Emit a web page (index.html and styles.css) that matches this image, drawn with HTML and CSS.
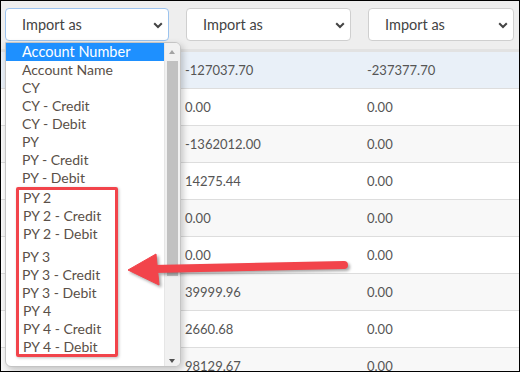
FILE: index.html
```html
<!DOCTYPE html>
<html lang="en">
<head>
    <meta charset="UTF-8">
    <meta name="viewport" content="width=device-width, initial-scale=1.0">
    <title>Import mapping</title>
    <link rel="stylesheet" href="styles.css">
</head>
<body>
    <div class="frame">
        <div class="grid head">
            <div class="cell first">
                <div class="select focused"><span>Import as</span><svg width="10" height="7" viewBox="0 0 10 7"><path d="M1.2 1.2l3.8 3.8 3.8-3.8" fill="none" stroke="#444" stroke-width="2"/></svg></div>
            </div>
            <div class="cell">
                <div class="select"><span>Import as</span><svg width="10" height="7" viewBox="0 0 10 7"><path d="M1.2 1.2l3.8 3.8 3.8-3.8" fill="none" stroke="#444" stroke-width="2"/></svg></div>
            </div>
            <div class="cell last">
                <div class="select"><span>Import as</span><svg width="10" height="7" viewBox="0 0 10 7"><path d="M1.2 1.2l3.8 3.8 3.8-3.8" fill="none" stroke="#444" stroke-width="2"/></svg></div>
            </div>
        </div>

        <div class="rows">
            <div class="grid row hover"><div></div><div class="num">-127037.70</div><div class="num">-237377.70</div></div>
            <div class="grid row"><div></div><div class="num">0.00</div><div class="num">0.00</div></div>
            <div class="grid row"><div></div><div class="num">-1362012.00</div><div class="num">0.00</div></div>
            <div class="grid row"><div></div><div class="num">14275.44</div><div class="num">0.00</div></div>
            <div class="grid row"><div></div><div class="num">0.00</div><div class="num">0.00</div></div>
            <div class="grid row"><div></div><div class="num">0.00</div><div class="num">0.00</div></div>
            <div class="grid row"><div></div><div class="num">39999.96</div><div class="num">0.00</div></div>
            <div class="grid row"><div></div><div class="num">2660.68</div><div class="num">0.00</div></div>
            <div class="grid row"><div></div><div class="num">98129.67</div><div class="num">0.00</div></div>
        </div>

        <!-- open dropdown of the first select -->
        <div class="listbox">
            <ul class="options">
                <li class="selected">Account Number</li>
                <li>Account Name</li>
                <li>CY</li>
                <li>CY - Credit</li>
                <li>CY - Debit</li>
                <li>PY</li>
                <li>PY - Credit</li>
                <li>PY - Debit</li>
                <li class="shift gap-sm">PY 2</li>
                <li class="shift">PY 2 - Credit</li>
                <li class="shift">PY 2 - Debit</li>
                <li class="gap-lg">PY 3</li>
                <li>PY 3 - Credit</li>
                <li>PY 3 - Debit</li>
                <li class="shift">PY 4</li>
                <li class="shift">PY 4 - Credit</li>
                <li class="shift">PY 4 - Debit</li>
            </ul>
            <div class="scrollbar">
                <span class="arrow up"></span>
                <span class="thumb"></span>
                <span class="arrow down"></span>
            </div>
        </div>

        <!-- annotation -->
        <div class="highlight-box"></div>
        <svg class="pointer" width="518" height="370" viewBox="0 0 518 370">
            <g fill="#f2444b" stroke="#f2444b" class="shadowed">
                <line x1="152" y1="268" x2="343" y2="264" stroke-width="8" stroke-linecap="round"/>
                <polygon points="127,269 155,253 158,284" stroke-width="1" stroke-linejoin="round"/>
            </g>
        </svg>
    </div>
</body>
</html>
```

FILE: styles.css
```css
body {
    margin: 0;
    font-family: 'Lato', 'Liberation Sans', sans-serif;
    background-color: #fff;
}
.frame {
    position: relative;
    width: 520px;
    height: 372px;
    box-sizing: border-box;
    border: 1px solid #000;
    overflow: hidden;
    background-color: #fff;
}
.grid {
    display: grid;
    grid-template-columns: 177px 182px 1fr;
}
.head {
    background-color: #eeeeee;
    padding: 7px 0 8px;
    border-bottom: 3px solid #e2e2e2;
}
.head .cell {
    padding: 0 9px 0 8px;
}
.head .cell.first {
    padding-left: 4px;
}
.head .cell.last {
    padding-right: 5px;
}
.select {
    height: 33px;
    box-sizing: border-box;
    display: flex;
    align-items: center;
    justify-content: space-between;
    padding: 0 5px 0 16px;
    background-color: #fff;
    border: 1px solid #cfcfcf;
    border-radius: 4px;
    font-size: 14.5px;
    color: #444;
}
.select.focused {
    border-color: #9cc3ee;
}
.select svg {
    margin-top: 1px;
}
.row {
    height: 36px;
    align-items: center;
    border-bottom: 1px solid #dddddd;
    font-size: 13px;
    color: #555;
}
.row:nth-child(odd) {
    background-color: #f8f8f8;
}
.row.hover {
    background-color: #e9f0f8;
}
.num {
    padding-left: 7px;
}
.listbox {
    position: absolute;
    left: 4px;
    top: 41px;
    width: 176px;
    height: 325px;
    box-sizing: border-box;
    display: flex;
    background-color: #fff;
    border: 1px solid #c4c4c4;
    border-radius: 0 6px 6px 6px;
    box-shadow: 2px 3px 7px rgba(0,0,0,0.22);
    overflow: hidden;
}
.options {
    flex: 1;
    list-style: none;
    margin: 0;
    padding: 0;
    overflow: hidden;
}
.options li {
    height: 18px;
    line-height: 18px;
    padding-left: 16px;
    font-size: 14px;
    color: #5a5048;
    white-space: nowrap;
}
.options li.selected {
    background-color: #1e90ff;
    color: #fff;
    font-size: 14.5px;
}
.options li.shift {
    padding-left: 17px;
}
.options li.gap-sm {
    margin-top: 2px;
}
.options li.gap-lg {
    margin-top: 5px;
}
.scrollbar {
    position: relative;
    width: 15px;
    background-color: #f1f1f1;
    border-left: 1px solid #e6e6e6;
}
.thumb {
    position: absolute;
    left: 2px;
    right: 2px;
    top: 18px;
    height: 215px;
    background-color: #c1c1c1;
}
.arrow {
    position: absolute;
    left: 4px;
    width: 0;
    height: 0;
    border-left: 3.5px solid transparent;
    border-right: 3.5px solid transparent;
}
.arrow.up {
    top: 7px;
    border-bottom: 4px solid #a3a3a3;
}
.arrow.down {
    bottom: 3px;
    border-top: 4px solid #505050;
}
.highlight-box {
    position: absolute;
    left: 15px;
    top: 186px;
    width: 102px;
    height: 170px;
    box-sizing: border-box;
    border: 3px solid #f2444b;
    border-radius: 2px;
    box-shadow: 1px 1px 3px rgba(0,0,0,0.25);
}
.pointer {
    position: absolute;
    left: 0;
    top: 0;
    pointer-events: none;
}
.shadowed {
    filter: drop-shadow(2px 2px 1.5px rgba(0,0,0,0.35));
}
```
